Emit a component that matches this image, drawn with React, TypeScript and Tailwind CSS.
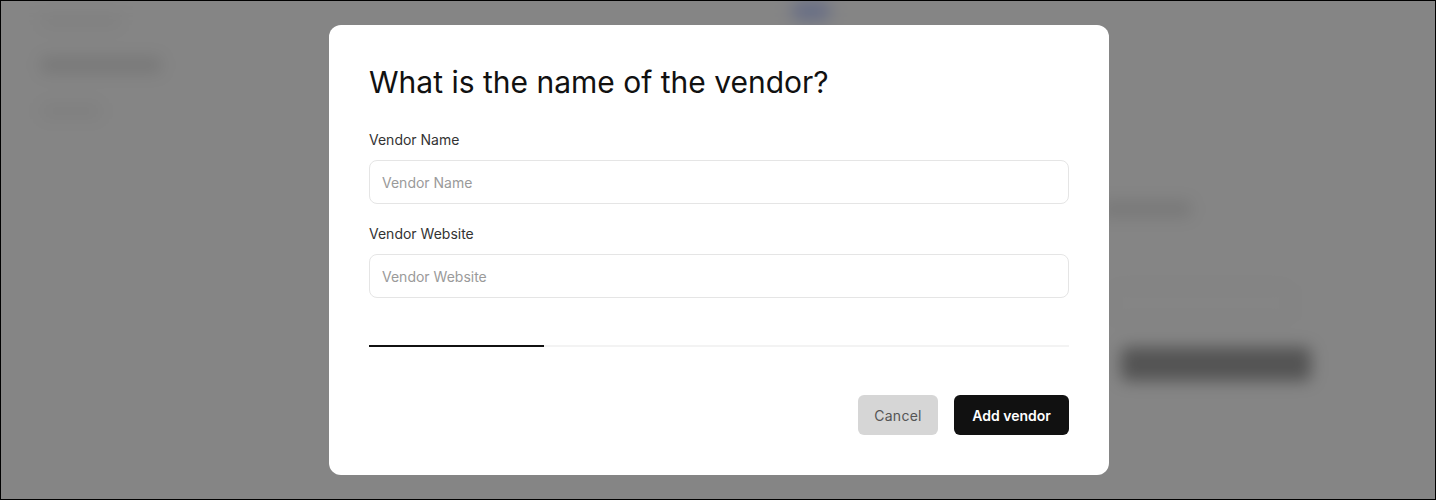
import React from 'react';

const font = { fontFamily: 'Inter, "Liberation Sans", sans-serif' };

const BackgroundPage = () => (
  <div className="absolute inset-0 flex bg-white blur-[8px]">
    {/* Sidebar */}
    <div className="w-[300px] flex flex-col gap-[30px] pl-[40px] pt-[14px]">
      <span className="w-[80px] h-[12px] bg-neutral-100 rounded" />
      <span className="w-[120px] h-[16px] bg-neutral-200 rounded" />
      <span className="w-[60px] h-[16px] bg-neutral-100 rounded" />
    </div>
    {/* Main */}
    <div className="flex-1 relative">
      <div className="absolute left-[490px] top-0 w-[40px] h-[20px] rounded-full bg-indigo-200" />
      <div className="absolute left-[800px] top-[200px] w-[90px] h-[16px] bg-neutral-200 rounded" />
      <div className="absolute left-[810px] top-[285px] w-[180px] h-[34px] border border-neutral-200 rounded-md" />
      <div className="absolute left-[820px] top-[346px] w-[190px] h-[34px] bg-neutral-400 rounded-md" />
    </div>
  </div>
);

export default function App() {
  return (
    <div
      className="relative w-[1436px] h-[500px] overflow-hidden border border-black"
      style={font}
    >
      <BackgroundPage />
      <div className="absolute inset-0 bg-black/[0.48]" />

      <div className="absolute inset-0 flex items-start justify-center pt-[24px] pl-[2px]">
        <div className="w-[780px] bg-white rounded-[12px] px-[40px] pt-[37px] pb-[40px]">
          <h2 className="text-[30px] leading-[40px] text-[#111] font-normal">
            What is the name of the vendor?
          </h2>

          <div className="mt-[28px] flex flex-col">
            <label className="text-[14px] leading-[20px] text-[#333]">Vendor Name</label>
            <input
              placeholder="Vendor Name"
              className="mt-[10px] h-[44px] w-full rounded-[8px] border border-[#e5e5e5] px-[12px] text-[14px] text-[#111] placeholder-[#9a9a9a] outline-none"
            />
            <label className="mt-[20px] text-[14px] leading-[20px] text-[#333]">Vendor Website</label>
            <input
              placeholder="Vendor Website"
              className="mt-[10px] h-[44px] w-full rounded-[8px] border border-[#e5e5e5] px-[12px] text-[14px] text-[#111] placeholder-[#9a9a9a] outline-none"
            />
          </div>

          {/* Progress */}
          <div className="mt-[47px] h-[2px] w-full bg-[#f3f3f3]">
            <div className="h-full w-[25%] bg-[#111]" />
          </div>

          <div className="mt-[48px] flex justify-end gap-[16px]">
            <button className="h-[40px] w-[80px] rounded-[6px] bg-[#d6d6d6] text-[14px] text-[#555] tracking-[0.02em]">
              Cancel
            </button>
            <button className="h-[40px] w-[115px] rounded-[6px] bg-[#111] text-[14px] font-semibold text-white">
              Add vendor
            </button>
          </div>
        </div>
      </div>
    </div>
  );
}
